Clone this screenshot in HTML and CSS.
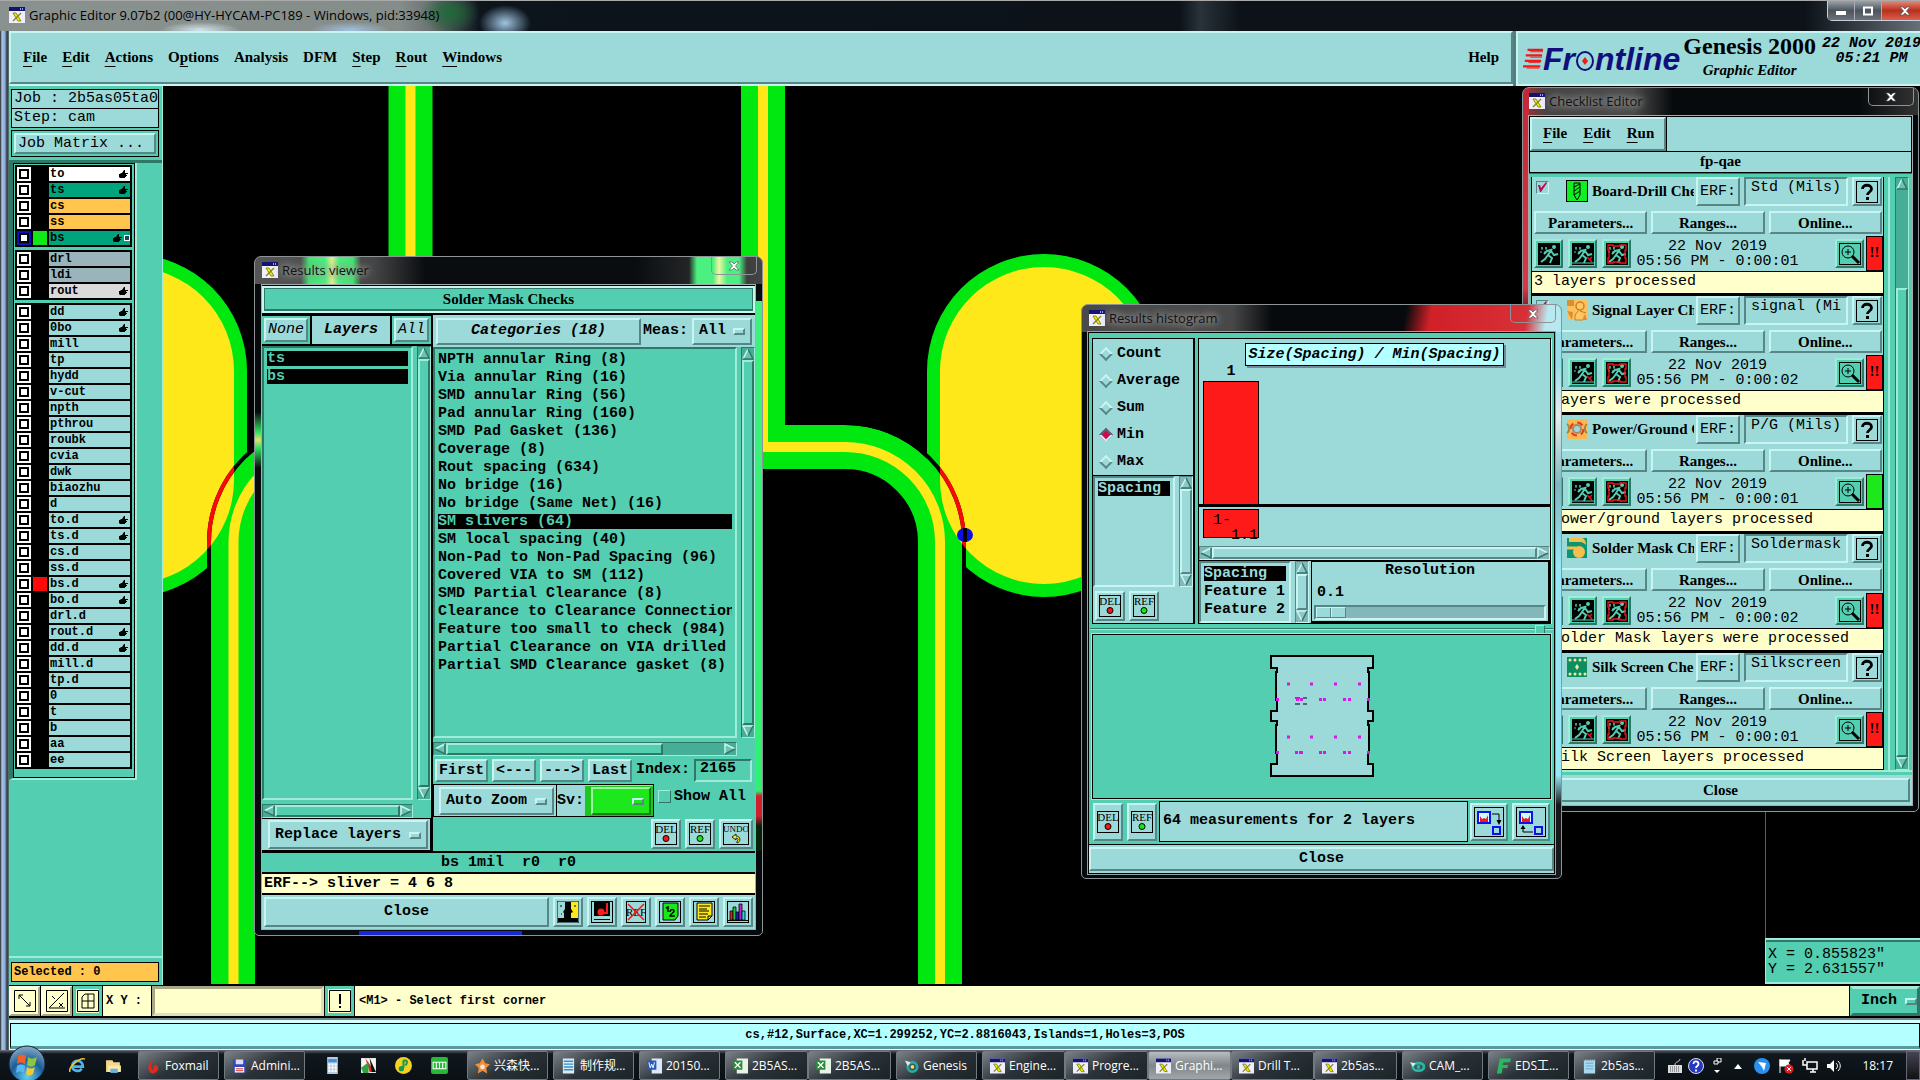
FILE: index.html
```
<!DOCTYPE html>
<html lang="en">
<head>
    <meta charset="UTF-8">
    <meta name="viewport" content="width=device-width, initial-scale=1.0">
    <title>Graphic Editor</title>
    <link rel="stylesheet" href="styles.css">
</head>
<body>
    <!-- icon set -->
    <svg class="defs" aria-hidden="true">
        <symbol id="xwin" viewBox="0 0 16 16"><rect width="16" height="16" fill="#eef"/><rect width="16" height="4" fill="#14146e"/><rect x="11" y="1" width="1" height="2" fill="#99f"/><rect x="13" y="1" width="1" height="2" fill="#99f"/><path d="M4 6h3l5 8H9z" fill="#f0f000" stroke="#8a8a10"/><path d="M12 6l-8 8" stroke="#8a8a10" stroke-width="1.500"/></symbol>
        <symbol id="close" viewBox="0 0 12 10"><path d="M1 1h3l2 2 2-2h3L7.500 5 11 9H8L6 7 4 9H1l3.500-4z" fill="#fff" stroke="#555" stroke-width=".7"/></symbol>
        <symbol id="hand" viewBox="0 0 9 8"><path d="M0 4h1l1-1h1l2-3h1v3h3v1H7v1h1v1H7v1H6v1H1L0 7z"/></symbol>
        <symbol id="up" viewBox="0 0 12 12"><path d="M6 1L1 11h10z" fill="#9cdada" fill-opacity=".45"/><path d="M6 1L1 11" stroke="#c8f8f0" stroke-width="1.500"/><path d="M6 1l5 10H1" fill="none" stroke="#2f7868" stroke-width="1.500"/></symbol>
        <symbol id="down" viewBox="0 0 12 12"><path d="M6 11L1 1h10z" fill="#9cdada" fill-opacity=".45"/><path d="M11 1H1l5 10" fill="none" stroke="#c8f8f0" stroke-width="1.500"/><path d="M11 1L6 11" stroke="#2f7868" stroke-width="1.500"/></symbol>
        <symbol id="left" viewBox="0 0 12 12"><path d="M1 6l10-5v10z" fill="#9cdada" fill-opacity=".45"/><path d="M11 1L1 6" stroke="#c8f8f0" stroke-width="1.500"/><path d="M1 6l10 5V1" fill="none" stroke="#2f7868" stroke-width="1.500"/></symbol>
        <symbol id="right" viewBox="0 0 12 12"><path d="M11 6L1 1v10z" fill="#9cdada" fill-opacity=".45"/><path d="M1 11V1l10 5" fill="none" stroke="#c8f8f0" stroke-width="1.500"/><path d="M11 6L1 11" stroke="#2f7868" stroke-width="1.500"/></symbol>
        <symbol id="del" viewBox="0 0 22 22"><rect x=".5" y=".5" width="21" height="21" fill="none" stroke="#000"/><text x="11" y="10" class="icon-text">DEL</text><circle cx="11" cy="15.500" r="3" fill="#f01818" stroke="#000"/></symbol>
        <symbol id="ref" viewBox="0 0 22 22"><rect x=".5" y=".5" width="21" height="21" fill="none" stroke="#000"/><text x="11" y="10" class="icon-text">REF</text><circle cx="11" cy="15.500" r="3" fill="#18e818" stroke="#000"/></symbol>
        <symbol id="undo" viewBox="0 0 26 22"><rect x=".5" y=".5" width="25" height="21" fill="none" stroke="#000"/><text x="13" y="9" class="icon-text small">UNDO</text><path d="M9 14l4-3v2c5 0 5 6 1 7v-2c2-1 1-3-1-3v2z" fill="#ffe81a" stroke="#000" stroke-width=".8"/></symbol>
        <symbol id="faces" viewBox="0 0 22 22"><rect width="22" height="22" fill="#9cdada" stroke="#000"/><rect x="14" y="1" width="7" height="20" fill="#ffe81a"/><path d="M8 1h6v7l2 3-2 1v5h7v4H1v-4h6v-5l-1-1 2-3z"/><path d="M4 4v2M5 13H4M18 4v2" stroke="#000"/></symbol>
        <symbol id="stamp" viewBox="0 0 22 22"><rect x=".5" y=".5" width="21" height="21" fill="none" stroke="#000"/><path d="M3 1h16v14H3zM3 18h16v1H3zM3 16h16"/><circle cx="10" cy="11" r="3.500" fill="#ff1a1a"/><path d="M16 2v11M12 12h5" stroke="#ff1a1a" stroke-width="2"/></symbol>
        <symbol id="noref" viewBox="0 0 22 22"><rect x="1.500" y=".5" width="19" height="21" fill="none" stroke="#000"/><text x="11" y="15" class="icon-text">REF</text><path d="M3 3l16 16M19 3L3 19" stroke="#f01818" stroke-width="1.500"/></symbol>
        <symbol id="twelve" viewBox="0 0 22 22"><rect x=".5" y=".5" width="21" height="21" fill="none" stroke="#000"/><path d="M4 2h15v13l-3 4H4z" fill="#18e818" stroke="#000"/><path d="M7 7l2-1v5M11 11c0-3 4-3 4-1s-4 3-4 5h5" fill="none" stroke="#000" stroke-width="1.500"/></symbol>
        <symbol id="note" viewBox="0 0 22 22"><rect x=".5" y=".5" width="21" height="21" fill="none" stroke="#000"/><path d="M4 2h15v13l-4 4H4z" fill="#ffe81a" stroke="#000"/><path d="M6 5h11M6 8h8M6 10h10M6 13h9M6 16h7M15 19v-4h4" stroke="#000" fill="none"/></symbol>
        <symbol id="bars" viewBox="0 0 22 22"><rect x=".5" y=".5" width="21" height="21" fill="none" stroke="#000"/><g stroke="#000" stroke-width=".8"><path d="M3 10h3v9H3z" fill="#e02020"/><path d="M6 6h3v13H6z" fill="#18c838"/><path d="M9 11h3v8H9z" fill="#1020e0"/><path d="M12 3h3v16h-3z" fill="#c020d0"/><path d="M15 10h3v9h-3z" fill="#20d8e8"/></g><path d="M1 19.500h20" stroke="#000"/></symbol>
        <symbol id="todown" viewBox="0 0 30 30"><rect x=".5" y=".5" width="29" height="29" fill="none" stroke="#000"/><rect x="4" y="5" width="12" height="11" fill="#cff" stroke="#1010e8" stroke-width="2"/><path d="M6 15V9l2 3 2-1 2 1 2-4v7z" fill="#f01818"/><rect x="19" y="20" width="7" height="7" fill="#9cdada" stroke="#1010e8" stroke-width="2"/><path d="M18 7h7v9" fill="none" stroke="#000"/><path d="M22.500 13h5L25 18z"/></symbol>
        <symbol id="toup" viewBox="0 0 30 30"><rect x=".5" y=".5" width="29" height="29" fill="none" stroke="#000"/><rect x="4" y="5" width="12" height="11" fill="#cff" stroke="#1010e8" stroke-width="2"/><path d="M6 15V9l2 3 2-1 2 1 2-4v7z" fill="#f01818"/><rect x="19" y="20" width="7" height="7" fill="#9cdada" stroke="#1010e8" stroke-width="2"/><path d="M17 25H7v-5" fill="none" stroke="#000"/><path d="M4.500 22h5L7 18z"/></symbol>
        <symbol id="run" viewBox="0 0 22 22"><rect width="22" height="22" fill="#000"/><circle cx="16" cy="4" r="2" fill="#54ceb0"/><path d="M14 6l-4 6 4 3-2 5M10 12l-3 4-4 3M13 8l3 4 4-1M13 7L9 8l-3 3" stroke="#54ceb0" stroke-width="2" fill="none"/><path d="M3 5h2M7 5h2M4 4v3M8 4v3M2 9h2M6 9h1" stroke="#54ceb0"/></symbol>
        <symbol id="runsel" viewBox="0 0 22 22"><use href="#run"/><path d="M15 14l5 5M20 14l-3 3" stroke="#e01818" stroke-width="1.500"/><path d="M0 20h22" stroke="#54ceb0"/></symbol>
        <symbol id="runbox" viewBox="0 0 22 22"><use href="#run"/><path d="M2 2h5v1h7V2h6v5h-1v8h1v5h-6v-1H7v1H2v-5h1V7H2z" fill="none" stroke="#f01818" stroke-width="1.300"/></symbol>
        <symbol id="lens" viewBox="0 0 22 22"><rect x=".5" y=".5" width="21" height="21" fill="#54ceb0" stroke="#000"/><circle cx="9" cy="9" r="6" fill="none" stroke="#000"/><path d="M9 6v6M6 9h6" stroke="#000"/><path d="M13 13l7 7" stroke="#000" stroke-width="3"/></symbol>
        <symbol id="help" viewBox="0 0 22 22"><rect x=".5" y=".5" width="21" height="21" fill="none" stroke="#000"/><path d="M6.500 8c0-5 9-5 9 0 0 3-4 3-4 6" fill="none" stroke="#000" stroke-width="2.800"/><rect x="10" y="16" width="3" height="3"/></symbol>
        <symbol id="drill" viewBox="0 0 22 22"><rect x=".5" y=".5" width="21" height="21" fill="#10f020" stroke="#000"/><path d="M8 3h6v12l-3 5-3-5zM8 7l6-3M8 11l6-4M8 15l6-4" fill="none" stroke="#000"/></symbol>
        <symbol id="signal" viewBox="0 0 22 22"><rect x="1" y="1" width="20" height="20" fill="#ffc05a"/><path d="M1 1h7v6H1zM1 12l6 1-1 8M19 15l2 6h-5z" fill="#d89038"/><circle cx="14" cy="7" r="4" fill="#ffc864" stroke="#c87e28" stroke-width="1.500"/><path d="M13 11l-4 5v5h8" fill="#ffc864" stroke="#c87e28"/><path d="M14 12l6 2" stroke="#c87e28"/></symbol>
        <symbol id="power" viewBox="0 0 22 22"><rect x="1" y="1" width="20" height="20" fill="#ffb850"/><circle cx="11" cy="11" r="4" fill="#9cdada" stroke="#a08878" stroke-width="2"/><circle cx="11" cy="11" r="6.500" fill="none" stroke="#e04018" stroke-width="2" stroke-dasharray="6 4"/><path d="M1 6c3 2 3 7 0 9M21 6c-3 2-3 7 0 9" fill="none" stroke="#a08050" stroke-width="2"/></symbol>
        <symbol id="mask" viewBox="0 0 22 22"><rect x="1" y="1" width="20" height="20" fill="#0e9470"/><circle cx="13" cy="15" r="6" fill="#f6bf4c"/><path d="M1 11h8l2 3" stroke="#f6bf4c" stroke-width="3" fill="none"/><path d="M3 1h13c3 1 4 4 4 7-3-4-8-3-11-3H3z" fill="#f6bf4c"/></symbol>
        <symbol id="silk" viewBox="0 0 22 22"><rect x="1" y="1" width="20" height="20" fill="#0b8f60"/><g fill="#f4e8a0"><circle cx="4" cy="4" r="1.500"/><circle cx="9" cy="4" r="1.500"/><circle cx="14" cy="4" r="1.500"/><circle cx="19" cy="4" r="1.500"/><circle cx="4" cy="18" r="1.500"/><circle cx="9" cy="18" r="1.500"/><circle cx="14" cy="18" r="1.500"/><circle cx="19" cy="18" r="1.500"/><path d="M9 11l2-3 2 3-2 3z"/></g></symbol>
    </svg>

    <div class="app">
        <div class="app-title">
            <svg class="xicon"><use href="#xwin"/></svg>
            <span>Graphic Editor 9.07b2 (00@HY-HYCAM-PC189 - Windows, pid:33948)</span>
            <div class="win-buttons">
                <button aria-label="Minimize"><svg width="12" height="10"><rect x="1" y="5" width="10" height="4" fill="#fff"/></svg></button>
                <button aria-label="Restore"><svg width="12" height="10"><rect x="2" y="1.500" width="8" height="7" fill="none" stroke="#fff" stroke-width="2"/></svg></button>
                <button class="quit" aria-label="Close"><svg width="12" height="10"><use href="#close"/></svg></button>
            </div>
        </div>

        <header class="top">
            <nav class="menubar">
                <a href="#"><u>F</u>ile</a>
                <a href="#"><u>E</u>dit</a>
                <a href="#"><u>A</u>ctions</a>
                <a href="#">O<u>p</u>tions</a>
                <a href="#">Analysis</a>
                <a href="#">DFM</a>
                <a href="#"><u>S</u>tep</a>
                <a href="#"><u>R</u>out</a>
                <a href="#"><u>W</u>indows</a>
                <a href="#" class="last">Help</a>
            </nav>
            <div class="brand">
                <div class="logo">
                    <svg class="speed" viewBox="0 0 22 26"><g stroke="#f01818" stroke-width="2.500"><path d="M5 3h17M3 9h18M2 15h18M0 21h19"/></g><g stroke="#f01818" stroke-width="1"><path d="M8 5h14M8 11h13M6 17h13M4 23h14"/></g></svg><span>Fr</span><svg class="ring" viewBox="0 0 20 22"><ellipse cx="10" cy="11" rx="8" ry="9" fill="none" stroke="#10107c" stroke-width="2"/><path d="M10 7l3 4-3 4-3-4z" fill="#f01818"/></svg><span>ntline</span>
                </div>
                <div class="product">
                    <strong>Genesis 2000</strong>
                    <em>Graphic Editor</em>
                </div>
                <div class="clock">22 Nov 2019<br>05:21 PM</div>
            </div>
        </header>

        <main class="workspace">
            <aside class="sidebar">
                <div class="job">Job : 2b5as05ta0</div>
                <div class="job">Step: cam</div>
                <div class="matrix"><button class="btn mono">Job Matrix ...</button></div>
                <div class="layer-area">
                    <div class="layers" id="layers"></div>
                </div>
                <div class="selected">Selected : 0</div>
            </aside>
            <div class="canvas">
                <svg class="board" viewBox="163 86 1757 899" preserveAspectRatio="xMinYMin slice">
                    <clipPath id="pads"><rect x="26" y="267" width="208" height="317" rx="104"/><rect x="940" y="267" width="208" height="317" rx="104"/></clipPath>
                    <g fill="none" stroke="#00e810" stroke-width="44">
                        <path d="M410.500 86V300M763 86V447H845A95 95 0 0 1 940 542V984M233 984V542A95 95 0 0 1 328 447"/>
                    </g>
                    <rect x="13" y="254" width="234" height="343" rx="117" fill="#00e810"/>
                    <rect x="927" y="254" width="234" height="343" rx="117" fill="#00e810"/>
                    <rect x="26" y="267" width="208" height="317" rx="104" fill="#ffe81a"/>
                    <rect x="940" y="267" width="208" height="317" rx="104" fill="#ffe81a"/>
                    <path d="M209 575V542A119 119 0 0 1 328 423M964 575V542A119 119 0 0 0 845 423" fill="none" stroke="#000" stroke-width="4"/>
                    <path d="M209 575V542A119 119 0 0 1 328 423M964 575V542A119 119 0 0 0 845 423" fill="none" stroke="#f80808" stroke-width="4" clip-path="url(#pads)"/>
                    <path d="M410.500 86V300M763 86V447H845A95 95 0 0 1 940 542V984M233.500 984V542A95 95 0 0 1 328 447" fill="none" stroke="#ffe81a" stroke-width="10"/>
                    <ellipse cx="965" cy="535" rx="8" ry="7" fill="#1010e0"/>
                    <path d="M965 528v14" stroke="#000" stroke-width="4"/>
                    <path d="M1765.500 800V940" stroke="#2f6f5f"/>
                </svg>
                <div class="coords">X = 0.855823"<br>Y = 2.631557"</div>
            </div>
        </main>

        <div class="cmdline">
            <button class="tool" aria-label="Diagonal"><svg viewBox="0 0 22 22"><path d="M.5.5h21v21H.5zM5 5l11 11M5 9V5h4M16 12v4h-4" fill="none" stroke="#000"/></svg></button>
            <button class="tool" aria-label="Angle"><svg viewBox="0 0 22 22"><path d="M.5.5h21v21H.5zM3 18L18 3M3 18h16M6 6l3 3M13 13l4 4M17 13l-4 4" fill="none" stroke="#000"/></svg></button>
            <button class="tool on" aria-label="Grid"><svg viewBox="0 0 22 22"><path d="M.5.500h21v21H.5zM5 18V7l3-3h9v14zM11 4v14M5 11h12" fill="none" stroke="#000"/></svg></button>
            <label for="xy">X Y :</label>
            <input id="xy" type="text" class="field cream">
            <button class="tool on" aria-label="Apply"><svg viewBox="0 0 22 22"><path d="M.5.500h21v21H.5z" fill="none" stroke="#000"/><path d="M11 4v10M11 16v2" stroke="#000" stroke-width="2"/></svg></button>
            <div class="message">&lt;M1&gt; - Select first corner</div>
            <div class="option units"><select aria-label="Units"><option>Inch</option></select></div>
        </div>
        <div class="status"><div>cs,#12,Surface,XC=1.299252,YC=2.8816043,Islands=1,Holes=3,POS</div></div>
    </div>

    <!-- checklist editor -->
    <section class="win checklist">
        <div class="title"><svg class="xicon"><use href="#xwin"/></svg><span>Checklist Editor</span><button class="x" aria-label="Close"><svg width="12" height="10"><use href="#close"/></svg></button></div>
        <div class="client">
            <div class="cl-menu">
                <nav><a href="#"><u>F</u>ile</a><a href="#"><u>E</u>dit</a><a href="#"><u>R</u>un</a></nav>
            </div>
            <div class="cl-name">fp-qae</div>
            <div class="cl-body">
                <div class="cards" id="cards"></div>
                <div class="vscroll low"><svg><use href="#up"/></svg><i></i><svg><use href="#down"/></svg></div>
            </div>
            <div class="foot"><button class="btn">Close</button></div>
        </div>
    </section>

    <!-- results viewer -->
    <section class="win viewer">
        <div class="title"><svg class="xicon"><use href="#xwin"/></svg><span>Results viewer</span><button class="x" aria-label="Close"><svg width="12" height="10"><use href="#close"/></svg></button></div>
        <div class="client">
            <div class="heading">Solder Mask Checks</div>
            <div class="split">
                <div class="pane left">
                    <div class="layer-head">
                        <div><button class="btn it">None</button></div>
                        <h3>Layers</h3>
                        <div><button class="btn it">All</button></div>
                    </div>
                    <div class="listbox">
                        <ul class="list"><li class="sel">ts</li><li class="sel">bs</li></ul>
                        <div class="vscroll"><svg><use href="#up"/></svg><i></i><svg><use href="#down"/></svg></div>
                        <div class="hscroll"><svg><use href="#left"/></svg><i></i><svg><use href="#right"/></svg></div>
                    </div>
                    <div class="replace"><div class="option"><select aria-label="Layer mode"><option>Replace layers</option></select></div></div>
                </div>
                <div class="pane right">
                    <div class="cat-head">
                        <button class="btn bi">Categories (18)</button>
                        <label for="meas">Meas:</label>
                        <div class="option"><select id="meas"><option>All</option></select></div>
                    </div>
                    <div class="listbox">
                        <ul class="list">
                            <li>NPTH annular Ring (8)</li>
                            <li>Via annular Ring (16)</li>
                            <li>SMD annular Ring (56)</li>
                            <li>Pad annular Ring (160)</li>
                            <li>SMD Pad Gasket (136)</li>
                            <li>Coverage (8)</li>
                            <li>Rout spacing (634)</li>
                            <li>No bridge (16)</li>
                            <li>No bridge (Same Net) (16)</li>
                            <li class="sel">SM slivers (64)</li>
                            <li>SM local spacing (40)</li>
                            <li>Non-Pad to Non-Pad Spacing (96)</li>
                            <li>Covered VIA to SM (112)</li>
                            <li>SMD Partial Clearance (8)</li>
                            <li>Clearance to Clearance Connection</li>
                            <li>Feature too small to check (984)</li>
                            <li>Partial Clearance on VIA drilled</li>
                            <li>Partial SMD Clearance gasket (8)</li>
                        </ul>
                        <div class="vscroll"><svg><use href="#up"/></svg><i></i><svg><use href="#down"/></svg></div>
                        <div class="hscroll part"><svg><use href="#left"/></svg><i></i><svg><use href="#right"/></svg></div>
                    </div>
                    <div class="nav-row">
                        <button class="btn wide">First</button>
                        <button class="btn">&lt;---</button>
                        <button class="btn">---&gt;</button>
                        <button class="btn">Last</button>
                        <label for="index">Index:</label>
                        <input id="index" class="field" type="text" value="2165">
                    </div>
                    <div class="zoom-row">
                        <div class="cell"><div class="option"><select aria-label="Zoom mode"><option>Auto Zoom</option></select></div></div>
                        <div class="cell sv"><label for="sv">Sv:</label><div class="green"><div class="option"><select id="sv"><option></option></select></div></div></div>
                        <label class="show"><input type="checkbox">Show All</label>
                    </div>
                    <div class="icon-row">
                        <button class="btn sq" aria-label="Delete"><svg><use href="#del"/></svg></button>
                        <button class="btn sq" aria-label="Reference"><svg><use href="#ref"/></svg></button>
                        <button class="btn sq undo" aria-label="Undo"><svg><use href="#undo"/></svg></button>
                    </div>
                </div>
            </div>
            <div class="info">bs 1mil&nbsp; r0&nbsp; r0</div>
            <div class="erf">ERF--&gt; sliver = 4 6 8</div>
            <div class="bottom">
                <button class="btn grow">Close</button>
                <button class="btn sq" aria-label="Compare"><svg><use href="#faces"/></svg></button>
                <button class="btn sq" aria-label="Stamp"><svg><use href="#stamp"/></svg></button>
                <button class="btn sq" aria-label="No reference"><svg><use href="#noref"/></svg></button>
                <button class="btn sq" aria-label="Count"><svg><use href="#twelve"/></svg></button>
                <button class="btn sq" aria-label="Notes"><svg><use href="#note"/></svg></button>
                <button class="btn sq" aria-label="Histogram"><svg><use href="#bars"/></svg></button>
            </div>
        </div>
    </section>

    <!-- results histogram -->
    <section class="win histogram">
        <div class="title"><svg class="xicon"><use href="#xwin"/></svg><span>Results histogram</span><button class="x" aria-label="Close"><svg width="12" height="10"><use href="#close"/></svg></button></div>
        <div class="client">
            <div class="h-top">
                <div class="h-left">
                    <fieldset class="radios">
                        <label><input type="radio" name="stat">Count</label>
                        <label><input type="radio" name="stat">Average</label>
                        <label><input type="radio" name="stat">Sum</label>
                        <label><input type="radio" name="stat" checked>Min</label>
                        <label><input type="radio" name="stat">Max</label>
                    </fieldset>
                    <div class="listbox">
                        <ul class="list"><li class="sel">Spacing</li></ul>
                        <div class="vscroll"><svg><use href="#up"/></svg><i></i><svg><use href="#down"/></svg></div>
                    </div>
                    <div class="h-icons">
                        <button class="btn sq" aria-label="Delete"><svg><use href="#del"/></svg></button>
                        <button class="btn sq" aria-label="Reference"><svg><use href="#ref"/></svg></button>
                    </div>
                </div>
                <div class="h-right">
                    <div class="chart">
                        <h4>Size(Spacing) / Min(Spacing)</h4>
                        <div class="plot"><div class="column"><span>1</span><div class="bar"></div></div></div>
                        <div class="axis"><div class="range">1-<br>&nbsp;&nbsp;1.1</div></div>
                        <div class="hscroll"><svg><use href="#left"/></svg><i></i><svg><use href="#right"/></svg></div>
                    </div>
                    <div class="h-controls">
                        <div class="listbox">
                            <ul class="list"><li class="sel">Spacing</li><li>Feature 1</li><li>Feature 2</li></ul>
                            <div class="vscroll"><svg><use href="#up"/></svg><i></i><svg><use href="#down"/></svg></div>
                        </div>
                        <div class="resolution">
                            <label for="res">Resolution</label>
                            <output for="res">0.1</output>
                            <input id="res" type="range" min="0" max="10" value="0">
                        </div>
                    </div>
                </div>
            </div>
            <div class="sash"><i></i></div>
            <div class="map">
                <svg width="104" height="124" viewBox="0 0 104 124">
                    <path d="M1 1h102v12h-5v4h1v28h-1v11h5v10h-5v4h1v28h-1v11h5v12H1v-12h6V98H6V70h1v-4H1V56h6V45H6V17h1v-4H1z" fill="#9cdada" stroke="#000" stroke-width="2"/>
                    <path d="M25 43h5M33 43h4M25 49h5M33 49h4" stroke="#000"/>
                    <g stroke="#d818e8" stroke-width="3">
                        <path d="M17 29h3M40 29h3M64 29h3M88 29h3M17 82h3M40 82h3M64 82h3M88 82h3"/>
                        <path d="M6 44.500h3M26 44.500h3M30 44.500h3M49 44.500h3M53 44.500h3M73 44.500h3M78 44.500h3M97 44.500h3"/>
                        <path d="M6 97.500h3M25 97.500h3M29 97.500h4M49 97.500h3M53 97.500h3M73 97.500h3M78 97.500h3M97 97.500h3"/>
                    </g>
                </svg>
            </div>
            <div class="h-bottom">
                <button class="btn sq" aria-label="Delete"><svg><use href="#del"/></svg></button>
                <button class="btn sq" aria-label="Reference"><svg><use href="#ref"/></svg></button>
                <div class="summary">64 measurements for 2 layers</div>
                <button class="btn big" aria-label="Send down"><svg><use href="#todown"/></svg></button>
                <button class="btn big" aria-label="Send up"><svg><use href="#toup"/></svg></button>
            </div>
            <div class="foot"><button class="btn mono">Close</button></div>
        </div>
    </section>

    <footer class="taskbar">
        <button class="orb" aria-label="Start"><svg viewBox="0 0 38 38"><defs><radialGradient id="og" cx=".5" cy=".85" r=".9"><stop offset="0" stop-color="#5fd0f8"/><stop offset=".5" stop-color="#1c5c98"/><stop offset="1" stop-color="#9bb8cc"/></radialGradient></defs><circle cx="19" cy="19" r="18" fill="url(#og)" stroke="#123"/><path d="M10 11c3-2 5-2 8 0l-1 8c-3-2-5-2-8 0z" fill="#f0602a"/><path d="M20 12c3 2 5 2 9 0l-2 8c-3 2-5 2-8 0z" fill="#8cc83c"/><path d="M9 21c3-2 5-2 8 0l-1 7c-3-2-5-2-8 0z" fill="#58b8f0"/><path d="M19 22c3 2 5 2 8 0l-2 7c-3 2-5 2-7 0z" fill="#f8c830"/></svg></button>
        <div class="quick">
            <svg viewBox="0 0 16 16"><path d="M3 9h10c0-7-9-7-10-1 0 6 7 6 9 3" fill="none" stroke="#4ab4f0" stroke-width="2.500"/><path d="M1 14C-1 10 10 0 15 2" fill="none" stroke="#f4c430" stroke-width="1.500"/></svg>
            <svg viewBox="0 0 16 16"><path d="M1 3h6l1 2h6v9H1z" fill="#f0d888"/><path d="M3 8h12v6H3z" fill="#fae8a8"/><path d="M5 11h7v4H5z" fill="#6ab0e0"/></svg>
        </div>
        <a href="#" class="task"><svg viewBox="0 0 16 16"><path d="M8 0C2 4 0 14 7 16c6 0 8-8 4-9-3 0-5 4-2 5C4 12 5 5 8 0z" fill="#e02a1a"/></svg>Foxmail</a>
        <a href="#" class="task"><svg viewBox="0 0 16 16"><path d="M1 1h13l1 2v12H1z" fill="#3048c0"/><path d="M4 1h8v5H4z" fill="#dde"/><path d="M3 9h10v6H3z" fill="#fff"/><path d="M4 11h8M4 13h8" stroke="#c22"/></svg>Admini...</a>
        <div class="quick wide">
            <svg viewBox="0 0 16 16"><path d="M3 0h10v16H3z" fill="#b8cce0"/><path d="M4 2h8v3H4z" fill="#3890e0"/><path d="M4 7h8M4 10h8M4 13h8" stroke="#fff" stroke-width="2" stroke-dasharray="2 1"/></svg>
            <svg viewBox="0 0 16 16"><path d="M1 1h14v14H1z" fill="#f4f4f4"/><path d="M5 1l9 13H9z" fill="#e02818"/><path d="M9 1l6 13h-4z" fill="#111"/><path d="M1 10l7-5v10H3z" fill="#30a040"/></svg>
            <svg viewBox="0 0 16 16"><circle cx="8" cy="8" r="8" fill="#f8d020"/><path d="M8 3v7M8 3c4 0 4 2 2 5" fill="none" stroke="#1a9850" stroke-width="2"/><circle cx="6" cy="11" r="2.500" fill="#1a9850"/></svg>
            <svg viewBox="0 0 16 16"><rect width="16" height="16" rx="2" fill="#28b838"/><path d="M2 5h12v6H2zM5 5v6M8 5v6M11 5v6" fill="none" stroke="#fff"/></svg>
        </div>
        <a href="#" class="task"><svg viewBox="0 0 16 16"><path d="M8 0l3 5 5 1-4 4 1 6-5-3-5 3 1-6-4-4 5-1z" fill="#f09030"/><circle cx="8" cy="9" r="2.500" fill="#fde"/></svg>兴森快...</a>
        <a href="#" class="task"><svg viewBox="0 0 16 16"><path d="M2 0h12v16H2z" fill="#d8ecf8"/><path d="M3 3h10M3 6h10M3 9h10M3 12h10" stroke="#3890c8" stroke-width="1.500"/></svg>制作规...</a>
        <a href="#" class="task"><svg viewBox="0 0 16 16"><path d="M5 0h11v16H5z" fill="#dfe8f8"/><path d="M0 2h10v10H0z" fill="#2858b8"/><path d="M2 4l1.500 6L5 6l1.500 4L8 4" fill="none" stroke="#fff"/></svg>20150...</a>
        <div class="group">
            <a href="#" class="task"><svg viewBox="0 0 16 16"><path d="M4 0h12v16H4z" fill="#e8f4e8"/><path d="M0 2h10v10H0z" fill="#2c8c3c"/><path d="M2 4l6 6M8 4l-6 6" stroke="#fff" stroke-width="1.500"/></svg>2B5AS...</a>
            <a href="#" class="task"><svg viewBox="0 0 16 16"><path d="M4 0h12v16H4z" fill="#e8f4e8"/><path d="M0 2h10v10H0z" fill="#2c8c3c"/><path d="M2 4l6 6M8 4l-6 6" stroke="#fff" stroke-width="1.500"/></svg>2B5AS...</a>
        </div>
        <a href="#" class="task"><svg viewBox="0 0 16 16"><circle cx="9" cy="9" r="5" fill="none" stroke="#28a8a0" stroke-width="3"/><path d="M1 2l6 2-3 4z" fill="#d8f0e8"/><circle cx="9" cy="9" r="2" fill="#f0e060"/></svg>Genesis</a>
        <div class="group">
            <a href="#" class="task"><svg><use href="#xwin"/></svg>Engine...</a>
            <a href="#" class="task"><svg><use href="#xwin"/></svg>Progre...</a>
            <a href="#" class="task active"><svg><use href="#xwin"/></svg>Graphi...</a>
            <a href="#" class="task"><svg><use href="#xwin"/></svg>Drill T...</a>
            <a href="#" class="task"><svg><use href="#xwin"/></svg>2b5as...</a>
        </div>
        <a href="#" class="task"><svg viewBox="0 0 16 16"><ellipse cx="9" cy="9" rx="6" ry="4" fill="none" stroke="#28b8a8" stroke-width="3"/><circle cx="9" cy="9" r="2" fill="#28b8a8"/><path d="M0 4l6 1-3 4z" fill="#d8f0e8"/></svg>CAM_...</a>
        <a href="#" class="task"><svg viewBox="0 0 16 16"><path d="M4 0h12l-1 4H8L7 7h6l-1 3H7l-1 6H1z" fill="#28b860"/></svg>EDS工...</a>
        <a href="#" class="task"><svg viewBox="0 0 16 16"><path d="M2 1h12v15H2z" fill="#a8d8f0"/><path d="M2 1h12" stroke="#555" stroke-width="2" stroke-dasharray="1 1"/><path d="M4 5h8M4 8h8M4 11h8" stroke="#6aa8c8"/></svg>2b5as...</a>
        <div class="tray">
            <svg viewBox="0 0 16 16"><path d="M1 7h14v8H1z" fill="#ddd"/><path d="M3 9h10M3 11h10M3 13h10" stroke="#555" stroke-dasharray="1 1"/><path d="M8 7c0-4 4-2 5-6" fill="none" stroke="#ccc"/></svg>
            <svg viewBox="0 0 16 16"><circle cx="8" cy="8" r="7.500" fill="#2438c0" stroke="#dde"/><path d="M5.500 6c0-4 5-3 5 0 0 2-2.500 2-2.500 4M8 11.500v2" fill="none" stroke="#fff" stroke-width="1.800"/></svg>
            <svg viewBox="0 0 16 16"><path d="M5 3h4v3H5zM8 3V0h4v4H9" fill="none" stroke="#fff"/><path d="M5 12h6l-3 3z" fill="#fff"/></svg>
            <svg viewBox="0 0 16 16"><path d="M4 11h8L8 6z" fill="#fff"/></svg>
            <svg class="gap" viewBox="0 0 16 16"><circle cx="8" cy="8" r="8" fill="#2890f0"/><path d="M4 4l8 1-2 8-2-4z" fill="#fff"/></svg>
            <svg class="gap" viewBox="0 0 16 16"><path d="M2 1v14M2 2h10l-2 3 2 3H2z" stroke="#fff" fill="#fff"/><circle cx="11" cy="11" r="4.500" fill="#e02020"/><path d="M9 9l4 4M13 9l-4 4" stroke="#fff"/></svg>
            <svg class="gap" viewBox="0 0 16 16"><path d="M5 4h10v7H5zM8 14h6M11 11v3M1 2v5h4M3 0v3" fill="none" stroke="#fff" stroke-width="1.500"/></svg>
            <svg class="gap" viewBox="0 0 16 16"><path d="M1 6h3l4-4v12L4 10H1z" fill="#fff"/><path d="M10 5c2 2 2 4 0 6M12 3c3 3 3 7 0 10" fill="none" stroke="#fff"/></svg>
            <time>18:17</time>
            <button class="peek" aria-label="Show desktop"></button>
        </div>
    </footer>
    <script src="script.js"></script>
</body>
</html>
```
FILE: styles.css
```
*, *::before, *::after {
    box-sizing: border-box;
}

:root {
    --cyan: #9cdada;
    --cyan-hi: #c8f4f2;
    --cyan-lo: #568686;
    --teal: #54ceb0;
    --teal-hi: #a0ecd8;
    --teal-lo: #2f7868;
    --cream: #ffffcc;
    --mono: "Liberation Mono", "Courier New", monospace;
    --serif: "Liberation Serif", "Times New Roman", serif;
    --ui: "Open Sans", "Noto Sans CJK SC", sans-serif;
}

body {
    margin: 0;
    height: 100vh;
    overflow: hidden;
    display: flex;
    flex-direction: column;
    position: relative;
    background: #000;
    color: #000;
    font: bold 15px/18px var(--mono);
}

a {
    color: inherit;
    text-decoration: none;
}

u {
    text-underline-offset: 4px;
}

button, input, select {
    font: inherit;
    color: inherit;
    margin: 0;
    padding: 0;
    border: 0;
    border-radius: 0;
    background: none;
}

h3, h4, ul, fieldset {
    margin: 0;
    padding: 0;
    border: 0;
    font: inherit;
    list-style: none;
}

.defs {
    position: absolute;
    width: 0;
    height: 0;
}

.icon-text {
    font: 11px var(--serif);
    text-anchor: middle;
}

.icon-text.small {
    font-size: 9px;
}

.xicon {
    width: 16px;
    height: 16px;
    flex: none;
}

/* raised controls */
.btn {
    background: var(--cyan);
    border: 2px solid;
    border-color: var(--cyan-hi) var(--cyan-lo) var(--cyan-lo) var(--cyan-hi);
    white-space: nowrap;
    display: flex;
    align-items: center;
    justify-content: center;
}

.btn.it {
    font-weight: normal;
    font-style: italic;
}

.btn.bi {
    font-style: italic;
}

.btn.mono {
    font-family: var(--mono);
}

.btn.sq {
    width: 30px;
    height: 30px;
    flex: none;
}

.btn.sq svg {
    width: 22px;
    height: 22px;
    flex: none;
}

.field {
    border: 2px solid;
    border-color: var(--cyan-lo) var(--cyan-hi) var(--cyan-hi) var(--cyan-lo);
    outline: 0;
    min-width: 0;
}

.option {
    position: relative;
    background: var(--cyan);
    border: 2px solid;
    border-color: var(--cyan-hi) var(--cyan-lo) var(--cyan-lo) var(--cyan-hi);
}

.option select {
    appearance: none;
    width: 100%;
    height: 100%;
    padding: 0 4px 0 5px;
    outline: 0;
}

.option::after {
    content: "";
    position: absolute;
    right: 5px;
    top: 50%;
    margin-top: -3px;
    width: 12px;
    height: 7px;
    border: 2px solid;
    border-color: var(--cyan-hi) var(--cyan-lo) var(--cyan-lo) var(--cyan-hi);
    pointer-events: none;
}

/* lists and scroll bars */
.listbox {
    display: grid;
    grid-template-columns: minmax(0, 1fr) 14px;
    grid-template-rows: minmax(0, 1fr);
    gap: 4px;
    flex: 1;
    min-height: 0;
}

.list {
    border: 2px solid;
    border-color: var(--teal-lo) var(--teal-hi) var(--teal-hi) var(--teal-lo);
    padding: 3px;
    overflow: hidden;
}

.list li {
    height: 15px;
    margin-bottom: 3px;
    line-height: 15px;
    white-space: nowrap;
    overflow: hidden;
}

.list .sel {
    background: #000;
    color: var(--teal);
}

.vscroll, .hscroll {
    display: flex;
    background: #46ae96;
    border: 1px solid;
    border-color: var(--teal-lo) var(--teal-hi) var(--teal-hi) var(--teal-lo);
}

.vscroll {
    flex-direction: column;
}

.hscroll {
    height: 14px;
}

.vscroll svg, .hscroll svg {
    width: 12px;
    height: 12px;
    flex: none;
}

.vscroll i, .hscroll i {
    flex: 1;
    background: var(--teal);
    border: 2px solid;
    border-color: var(--teal-hi) var(--teal-lo) var(--teal-lo) var(--teal-hi);
}

.hscroll.part i {
    flex: 0 0 72%;
}

.hscroll.part svg:last-child {
    margin-left: auto;
}

.vscroll.low i {
    margin-top: 98px;
}

/* main window */
.app {
    flex: 1;
    min-height: 0;
    display: flex;
    flex-direction: column;
    padding-left: 9px;
    background: linear-gradient(90deg, #222 0, #aec6e4 2px, #86a8d8 5px, #333 7px, #54807c 9px);
}

.app-title {
    height: 31px;
    margin-left: -9px;
    padding: 0 0 2px 9px;
    display: flex;
    gap: 4px;
    align-items: center;
    font: 13px/16px var(--ui);
    background:
        radial-gradient(ellipse 26px 18px at 505px 22px, #9fc4e0, transparent),
        radial-gradient(ellipse 30px 20px at 450px 12px, #1f6b38, transparent),
        radial-gradient(ellipse 40px 8px at 200px 29px, #cfe4ea, transparent),
        radial-gradient(ellipse 40px 8px at 350px 29px, #9fc0dc, transparent),
        linear-gradient(90deg, #8a9290 0, #858d8b 400px, #6a7472 430px, #0c141c 480px, #0c1218 1180px, #2a333a 1200px, #0c1218 1240px, #0c1218 94%, #667078 100%);
    border-top: 1px solid #aaa;
}

.win-buttons {
    display: flex;
    align-self: flex-start;
    margin-left: auto;
    border: 1px solid #ccd;
    border-top: 0;
    border-right: 0;
    border-radius: 0 0 0 5px;
}

.win-buttons button {
    width: 27px;
    height: 19px;
    border-right: 1px solid #aab;
    background: linear-gradient(#9aa2aa, #4c545c 50%, #6a727a);
    display: flex;
    align-items: center;
    justify-content: center;
}

.win-buttons .quit {
    width: 38px;
    padding-left: 8px;
    border-right: 0;
    background: linear-gradient(#e08a7c, #b8301c 50%, #d8604c);
}

.top {
    height: 55px;
    display: flex;
    gap: 3px;
    font-family: var(--serif);
}

.menubar {
    flex: 1;
    display: flex;
    align-items: center;
    gap: 15px;
    padding: 0 12px 2px;
    background: var(--cyan);
    border: 2px solid;
    border-color: var(--cyan-hi) var(--cyan-lo) var(--cyan-lo) var(--cyan-hi);
    box-shadow: 0 2px var(--cyan-hi);
    margin-bottom: 2px;
}

.menubar .last {
    margin-left: auto;
}

.brand {
    width: 404px;
    display: flex;
    align-items: center;
    padding-left: 5px;
    background: var(--cyan);
    border: 2px solid var(--cyan-hi);
    border-right: 0;
    overflow: hidden;
    white-space: nowrap;
}

.logo {
    display: flex;
    align-items: center;
    font: italic bold 32px/34px "Liberation Sans", Arial, sans-serif;
    color: #10107c;
}

.speed {
    width: 20px;
    height: 26px;
}

.ring {
    width: 20px;
    height: 22px;
    margin-top: 4px;
}

.product {
    display: flex;
    flex-direction: column;
    align-items: center;
    margin-left: 3px;
    padding-bottom: 6px;
}

.product strong {
    font-size: 24px;
    line-height: 28px;
}

.product em {
    font-size: 15px;
    line-height: 20px;
}

.clock {
    margin-left: 6px;
    align-self: flex-start;
    padding-top: 3px;
    font: italic bold 15px/15px var(--mono);
    text-align: center;
}

.workspace {
    flex: 1;
    min-height: 0;
    display: flex;
}

.sidebar {
    width: 154px;
    flex: none;
    display: flex;
    flex-direction: column;
    padding: 3px 3px 3px 2px;
    background: var(--teal);
    border-right: 1px solid var(--teal-hi);
}

.job {
    height: 20px;
    margin-bottom: -1px;
    padding-left: 2px;
    background: var(--cyan);
    border: 1px solid #000;
    font-weight: normal;
    white-space: nowrap;
}

.matrix {
    margin-top: 3px;
    padding: 2px;
    border: 1px solid #000;
    height: 27px;
}

.matrix .btn {
    width: 100%;
    height: 21px;
    padding-left: 2px;
    justify-content: flex-start;
    font-weight: normal;
}

.layer-area {
    flex: 1;
    min-height: 0;
    margin: 3px -3px 4px -2px;
    border-top: 3px solid var(--teal-lo);
    border-bottom: 2px solid var(--teal-hi);
}

.layers {
    width: 128px;
    display: flex;
    flex-direction: column;
    gap: 3px;
    padding: 2px 3px 9px 2px;
    border-left: 4px solid var(--teal-lo);
    border-right: 2px solid var(--teal-hi);
    border-bottom: 2px solid var(--teal-hi);
    box-shadow: inset 1px 1px #000, inset -1px -1px #000;
}

.layer-group {
    display: flex;
    flex-direction: column;
    gap: 2px;
    padding: 2px;
    background: #000;
}

.layer {
    display: flex;
    gap: 2px;
    height: 14px;
    font: bold 12px/14px var(--mono);
}

.layer input {
    appearance: none;
    width: 14px;
    height: 14px;
    background: #fff;
    border: 2px solid #fff;
    outline: 2px solid #000;
    outline-offset: -4px;
}

.layer input:checked {
    border-color: #1010b8;
    border-width: 3px;
}

.layer .swatch {
    width: 14px;
}

.layer label {
    flex: 1;
    padding-left: 1px;
    background: var(--cyan);
    display: flex;
    align-items: center;
}

.layer svg {
    width: 9px;
    height: 8px;
    margin-right: 2px;
}

.layer label span {
    flex: 1;
}

.layer .grid-mark {
    width: 6px;
    height: 6px;
    flex: none;
    border: 1px solid #fff;
    background: #245;
}

.selected {
    height: 20px;
    padding-left: 2px;
    background: #ffc54d;
    border: 1px solid #000;
    font: bold 12px/18px var(--mono);
}

.canvas {
    flex: 1;
    min-width: 0;
    position: relative;
    background: #000;
    overflow: hidden;
}

.board {
    display: block;
    width: 100%;
    height: 100%;
}

.coords {
    position: absolute;
    right: 0;
    bottom: 1px;
    width: 155px;
    height: 46px;
    padding: 7px 0 0 2px;
    background: var(--teal);
    border: 2px solid var(--teal-hi);
    border-width: 2px 0 2px 1px;
    box-shadow: inset 0 2px var(--teal-lo);
    font: 15px/15px var(--mono);
}

.cmdline {
    height: 33px;
    display: flex;
    align-items: stretch;
    gap: 1px;
    padding-bottom: 1px;
    background: #000;
    border-top: 1px solid #000;
    border-bottom: 1px solid #000;
    font-size: 12px;
}

.tool {
    width: 31px;
    padding: 2px;
    background: var(--cream);
    border: 2px solid;
    border-color: #fffff0 #a8a888 #a8a888 #fffff0;
    display: flex;
    align-items: center;
    justify-content: center;
}

.tool.on {
    width: 29px;
    outline: 3px solid var(--teal);
    outline-offset: -3px;
}

.tool svg {
    width: 22px;
    height: 22px;
    flex: none;
}

.cmdline label {
    width: 48px;
    padding-left: 3px;
    background: var(--cream);
    line-height: 31px;
}

.field.cream {
    width: 172px;
    padding-left: 5px;
    background: var(--cream);
    border: 3px solid;
    border-color: #a8a888 #e0e0b8 #e0e0b8 #a8a888;
}

.message {
    flex: 1;
    padding-left: 4px;
    background: var(--cream);
    line-height: 31px;
}

.option.units {
    width: 70px;
    background: var(--teal);
    border: 3px solid;
    border-color: var(--teal-hi) var(--teal-lo) var(--teal-lo) var(--teal);
    font-size: 15px;
}

.option.units select {
    padding-left: 8px;
}

.option.units::after {
    right: 0;
}

.status {
    height: 32px;
    padding: 3px 0 2px 1px;
    background: #d8ffff;
    border-top: 2px solid #708888;
}

.status div {
    height: 26px;
    background: #b4ffff;
    border: 1px solid #000;
    border-bottom: 3px solid #5a9a9a;
    font-size: 12px;
    line-height: 22px;
    text-align: center;
}

/* floating windows */
.win {
    position: absolute;
    display: flex;
    flex-direction: column;
    padding: 0 6px 5px;
    border: 1px solid #8d9498;
    border-radius: 7px 7px 5px 5px;
    background: #0a0d10;
}

.title {
    height: 27px;
    flex: none;
    display: flex;
    gap: 4px;
    padding: 0 0 2px 1px;
    align-items: center;
    font: 13px/18px var(--ui);
}

.title span {
    padding-right: 20px;
    color: #111;
    text-shadow: 0 0 6px #aaa, 0 0 10px #999, 0 0 14px #999;
}

.title .x {
    width: 46px;
    height: 18px;
    margin: 0 -1px 0 auto;
    align-self: flex-start;
    border: 1px solid #8d9498;
    border-top: 0;
    border-radius: 0 0 5px 5px;
    display: flex;
    align-items: center;
    justify-content: center;
}

.client {
    flex: 1;
    min-height: 0;
    display: flex;
    flex-direction: column;
    border: 1px solid #aaa;
}

.viewer {
    left: 254px;
    top: 256px;
    width: 509px;
    height: 680px;
    background:
        linear-gradient(#1a28d0, #1a28d0) 104px 100% / 163px 4px no-repeat,
        linear-gradient(#40f080 0, #30f070 490px, #d02030 495px, #d02030 515px, #082008 525px) 100% 44px / 6px 550px no-repeat,
        linear-gradient(transparent, #30e060 20px, #e0e070 28px, #30e060 36px, transparent 56px) 0 155px / 6px 60px no-repeat,
        linear-gradient(90deg, transparent 46px, #40e870 54px, #4cf080 70px, #e8f090 77px, #4cf080 84px, #40e870 98px, transparent 106px, transparent 434px, #4cf080 442px, #4cf080 458px, #f4f4a0 464px, #4cf080 472px, #4cf080 484px, transparent 492px) 0 0 / 100% 27px no-repeat,
        linear-gradient(90deg, #555 0, #444 120px, #0a0d10 170px, #0a0d10 380px, #444 100%) 0 0 / 100% 27px no-repeat,
        #070a0c;
}

.viewer .client {
    background: #000;
    gap: 2px;
    padding: 1px 0 0;
}

.heading {
    height: 27px;
    flex: none;
    border: 2px solid var(--cyan-hi);
    background: var(--teal);
    box-shadow: inset 1px 1px var(--teal-lo), inset -1px -2px var(--teal-lo);
    font: bold 15px/22px var(--serif);
    text-align: center;
}

.split {
    flex: 1;
    min-height: 0;
    display: flex;
    gap: 2px;
}

.pane {
    display: flex;
    flex-direction: column;
    background: var(--teal);
}

.pane.left {
    width: 169px;
}

.pane.right {
    flex: 1;
    min-width: 0;
}

.pane .listbox {
    grid-template-rows: minmax(0, 1fr) 14px;
}

.layer-head {
    height: 31px;
    flex: none;
    display: flex;
    gap: 2px;
    background: #000;
    border-top: 1px solid #000;
    border-bottom: 2px solid #000;
}

.layer-head div {
    padding: 2px;
    background: var(--teal);
}

.layer-head .btn {
    height: 24px;
    padding: 0 2px;
}

.layer-head h3 {
    flex: 1;
    background: var(--cyan);
    font-style: italic;
    line-height: 28px;
    text-align: center;
}

.replace {
    height: 33px;
    padding: 1px 2px 1px 6px;
    background: var(--cyan);
    border: 1px solid #000;
    border-left: 0;
}

.replace .option {
    height: 29px;
}

.cat-head {
    height: 32px;
    flex: none;
    display: flex;
    align-items: center;
    padding: 1px 3px;
    background: var(--cyan);
}

.cat-head .btn {
    width: 205px;
    height: 27px;
}

.cat-head label {
    flex: 1;
    padding-left: 2px;
}

.cat-head .option {
    width: 60px;
    height: 27px;
}

.nav-row {
    height: 28px;
    flex: none;
    display: flex;
    gap: 4px;
    padding: 3px 3px 2px 2px;
}

.nav-row .btn {
    width: 44px;
}

.nav-row .btn.wide {
    width: 53px;
}

.nav-row label {
    padding-top: 2px;
}

.nav-row .field {
    flex: 1;
    padding: 0 0 4px 4px;
    border-color: var(--teal-lo) var(--teal-hi) var(--teal-hi) var(--teal-lo);
}

.zoom-row {
    height: 33px;
    flex: none;
    display: flex;
}

.cell {
    display: flex;
    align-items: center;
    padding: 0 2px 0 5px;
    background: var(--cyan);
    border: 1px solid #000;
}

.cell .option {
    width: 115px;
    height: 28px;
}

.cell.sv {
    padding: 0;
    border-left: 0;
}

.green {
    margin-left: 1px;
    padding: 1px 2px 1px 6px;
    background: #1cc81c;
}

.green .option {
    width: 60px;
    height: 28px;
    background: #1ce81c;
    border-color: #9cf49c #1a801a #1a801a #9cf49c;
}

.show {
    display: flex;
    gap: 3px;
    padding: 4px 0 0 4px;
}

.show input {
    appearance: none;
    width: 13px;
    height: 13px;
    margin-top: 2px;
    border: 1px solid;
    border-color: var(--teal-hi) var(--teal-lo) var(--teal-lo) var(--teal-hi);
}

.icon-row {
    height: 34px;
    flex: none;
    display: flex;
    justify-content: flex-end;
    gap: 4px;
    padding: 2px 2px 2px 0;
}

.btn.sq.undo {
    width: 34px;
}

.btn.undo svg {
    width: 26px;
}

.info {
    height: 19px;
    flex: none;
    background: var(--teal);
    line-height: 20px;
    text-align: center;
}

.erf {
    height: 19px;
    flex: none;
    padding-left: 2px;
    background: var(--cream);
    line-height: 20px;
}

.bottom {
    height: 34px;
    flex: none;
    display: flex;
    gap: 4px;
    padding: 2px;
    background: var(--cyan);
}

.bottom .grow {
    flex: 1;
    height: 30px;
}

/* histogram */
.histogram {
    left: 1081px;
    top: 304px;
    width: 481px;
    height: 575px;
    padding-bottom: 4px;
    background:
        linear-gradient(100deg, transparent 320px, #d02028 345px, #d83038 440px, #b8e8f0 460px) 0 0 / 100% 27px no-repeat,
        linear-gradient(#98e0ec 0, #98e0ec 60px, #e8f0f0 110px, #80b8c0 180px, #98e8f8 260px, #98e8f8 470px, #14181a 500px) 100% 0 / 6px 100% no-repeat,
        linear-gradient(90deg, #4a4a4a 0, #484848 150px, #070a0c 190px) 0 0 / 100% 27px no-repeat,
        #070a0c;
}

.histogram .client {
    padding: 5px 3px 0;
    background: var(--teal);
    border-color: #000;
    box-shadow: 0 0 0 1px #98a0a0;
}

.h-top {
    height: 286px;
    flex: none;
    display: flex;
    gap: 3px;
}

.h-left {
    width: 103px;
    display: flex;
    flex-direction: column;
    background: var(--cyan);
    border: 1px solid #000;
    border-right: 2px solid #000;
}

.radios {
    display: flex;
    flex-direction: column;
    padding-top: 1px;
    border-bottom: 1px solid #000;
}

.radios label {
    height: 27px;
    display: flex;
    align-items: center;
    gap: 6px;
    padding-left: 8px;
}

.radios input {
    appearance: none;
    width: 10px;
    height: 10px;
    flex: none;
    transform: rotate(45deg);
    border: 2px solid;
    border-color: var(--cyan-hi) var(--cyan-lo) var(--cyan-lo) var(--cyan-hi);
}

.radios input:checked {
    background: #d00850;
    border-color: #567 var(--cyan-hi) var(--cyan-hi) #567;
}

.histogram .list, .histogram .vscroll, .histogram .hscroll {
    border-color: var(--cyan-lo) var(--cyan-hi) var(--cyan-hi) var(--cyan-lo);
}

.histogram .vscroll, .histogram .hscroll {
    background: #84b8b8;
}

.histogram .vscroll i, .histogram .hscroll i {
    background: var(--cyan);
    border-color: var(--cyan-hi) var(--cyan-lo) var(--cyan-lo) var(--cyan-hi);
}

.histogram .sel {
    color: var(--cyan);
}

.h-left .listbox {
    margin: 0 0 2px;
}

.h-icons {
    display: flex;
    gap: 4px;
    padding: 2px;
}

.h-right {
    flex: 1;
    min-width: 0;
    display: flex;
    flex-direction: column;
    background: var(--cyan);
    border: 1px solid #000;
    box-shadow: 1px 1px var(--cyan-hi);
}

.chart {
    position: relative;
    flex: 1;
    display: flex;
    flex-direction: column;
}

.chart h4 {
    position: absolute;
    left: 46px;
    top: 4px;
    width: 259px;
    background: #b4ffff;
    border: 1px solid #000;
    box-shadow: 2px 2px #789;
    font-style: italic;
    line-height: 20px;
    padding-top: 1px;
    text-align: center;
    white-space: nowrap;
}

.plot {
    flex: 1;
    display: flex;
    align-items: flex-end;
    padding-left: 4px;
    border-bottom: 3px solid #000;
}

.column {
    width: 56px;
    text-align: center;
}

.bar {
    height: 123px;
    background: #ff1a1a;
    border: 1px solid #000;
    border-bottom: 0;
}

.axis {
    height: 39px;
    padding: 2px 0 0 4px;
}

.range {
    width: 56px;
    height: 29px;
    padding: 3px 0 0 9px;
    background: #ff1a1a;
    border: 1px solid #000;
    font-weight: normal;
    line-height: 15px;
}

.h-controls {
    height: 63px;
    display: flex;
    gap: 2px;
    border-top: 1px solid #000;
}

.h-controls .listbox {
    flex: none;
    width: 110px;
}

.resolution {
    flex: 1;
    display: flex;
    flex-direction: column;
    padding: 0 2px;
    border: 1px solid #000;
    border-right-width: 2px;
    border-bottom-width: 2px;
}

.resolution label {
    text-align: center;
}

.resolution output {
    padding: 4px 0 0 3px;
}

.resolution input {
    appearance: none;
    width: 100%;
    height: 15px;
    margin-top: 3px;
    background: #84b8b8;
    border: 2px solid;
    border-color: var(--cyan-lo) var(--cyan-hi) var(--cyan-hi) var(--cyan-lo);
}

.resolution input::-webkit-slider-thumb {
    appearance: none;
    width: 30px;
    height: 11px;
    background: linear-gradient(90deg, transparent 13px, var(--cyan-lo) 13px, var(--cyan-lo) 14px, var(--cyan-hi) 14px, var(--cyan-hi) 15px, transparent 15px), var(--cyan);
    border: 1px solid;
    border-color: var(--cyan-hi) var(--cyan-lo) var(--cyan-lo) var(--cyan-hi);
}

.sash {
    height: 10px;
    flex: none;
    display: flex;
    justify-content: flex-end;
    align-items: center;
    margin: 0 -2px;
    padding-right: 8px;
    background: linear-gradient(var(--teal) 4px, var(--teal-lo) 4px, var(--teal-lo) 5px, var(--teal-hi) 5px, var(--teal-hi) 6px, var(--teal) 6px);
}

.sash i {
    width: 10px;
    height: 9px;
    background: var(--teal);
    border: 1px solid;
    border-color: var(--teal-hi) var(--teal-lo) var(--teal-lo) var(--teal-hi);
}

.map {
    flex: 1;
    min-height: 0;
    display: flex;
    align-items: center;
    justify-content: center;
    border: 1px solid #000;
    outline: 1px solid var(--teal-hi);
}

.h-bottom {
    height: 45px;
    flex: none;
    display: flex;
    align-items: center;
    gap: 4px;
    padding: 0 1px;
}

.h-bottom .sq {
    height: 38px;
}

.summary {
    flex: 1;
    height: 41px;
    margin: 0 -2px;
    padding-left: 3px;
    background: var(--cyan);
    border: 1px solid #000;
    line-height: 38px;
}

.btn.big {
    width: 38px;
    height: 38px;
}

.big svg {
    width: 30px;
    height: 30px;
    flex: none;
}

.foot {
    flex: none;
    padding: 2px 0;
    background: var(--cyan);
    border-top: 1px solid #000;
}

.foot .btn {
    width: 100%;
    height: 24px;
}

.histogram .foot {
    margin: 0 -3px;
}

/* checklist */
.checklist {
    left: 1522px;
    top: 87px;
    width: 397px;
    height: 725px;
    font-family: var(--serif);
    padding: 0 5px;
    padding-bottom: 5px;
    background:
        linear-gradient(#c02838, #d83848 200px, #070a0c 240px) 0 0 / 6px 100% no-repeat,
        linear-gradient(90deg, #a83038 0, #444 24px, #4a4a4a 110px, #070a0c 150px, #070a0c 85%, #333 100%) 0 0 / 100% 27px no-repeat,
        #070a0c;
}

.checklist .client {
    background: var(--teal);
}

.cl-menu {
    height: 36px;
    flex: none;
    background: var(--cyan);
    border: 1px solid #000;
}

.cl-menu nav {
    width: 136px;
    height: 34px;
    display: flex;
    align-items: center;
    gap: 16px;
    padding: 0 0 2px 11px;
    border: 2px solid;
    border-color: var(--cyan-hi) var(--cyan-lo) var(--cyan-lo) var(--cyan-hi);
    outline: 1px solid #000;
}

.cl-name {
    height: 21px;
    flex: none;
    background: var(--cyan);
    border: 1px solid #000;
    border-top: 0;
    line-height: 19px;
    text-align: center;
}

.cl-body {
    flex: 1;
    min-height: 0;
    display: flex;
    gap: 5px;
    margin-bottom: 3px;
    padding: 3px 3px 0 0;
    border-top: 1px solid var(--teal-lo);
    border-bottom: 2px solid var(--teal-hi);
    overflow: hidden;
}

.cards {
    flex: 1;
    min-width: 0;
    padding: 0 4px 0 2px;
    border-right: 2px solid var(--teal-hi);
}

.cl-body .vscroll {
    width: 14px;
    flex: none;
}

.card {
    height: 119px;
    display: flex;
    flex-direction: column;
    background: var(--cyan);
    border: 1px solid #000;
    border-top: 0;
    border-bottom-width: 3px;
}

.card-head {
    height: 32px;
    display: flex;
    align-items: flex-start;
    padding: 0 1px 0 4px;
}

.card-head input[type="checkbox"] {
    appearance: none;
    width: 13px;
    height: 13px;
    flex: none;
    margin: 4px 17px 0 0;
    border: 1px solid;
    border-color: var(--cyan-lo) var(--cyan-hi) var(--cyan-hi) var(--cyan-lo);
}

.card-head input[type="checkbox"]::before {
    content: "";
    display: block;
    width: 10px;
    height: 10px;
    background: #c00850;
    clip-path: polygon(10% 30%, 30% 30%, 40% 60%, 90% 0, 100% 10%, 40% 100%, 30% 100%);
}

.card-head > svg {
    width: 22px;
    height: 22px;
    flex: none;
    margin-top: 3px;
}

.card-name {
    flex: 1;
    min-width: 0;
    padding-top: 5px;
    margin: 0 2px 0 4px;
    overflow: hidden;
    white-space: nowrap;
}

.card-head .erf-btn {
    width: 44px;
    height: 29px;
    font: 15px/18px var(--mono);
}

.card-head .field {
    width: 104px;
    height: 29px;
    margin: 0 4px;
    padding: 0 0 9px 5px;
    font: 15px/18px var(--mono);
}

.card-head .sq {
    height: 29px;
}

.card-tools {
    display: flex;
    gap: 4px;
    padding: 2px 1px 2px 2px;
}

.card-tools .btn {
    flex: 1;
    height: 23px;
}

.card-run {
    height: 35px;
    display: flex;
    align-items: center;
    padding-left: 2px;
}

.card-run .sq {
    width: 29px;
    height: 29px;
    margin-right: 5px;
    background: var(--teal);
    border-color: var(--teal-hi) var(--teal-lo) var(--teal-lo) var(--teal-hi);
}

.card-run p {
    flex: 1;
    margin: 0;
    font: 15px/15px var(--mono);
    text-align: center;
    padding-right: 36px;
    white-space: nowrap;
}

.card-run .sq.lens {
    margin-right: 2px;
}

.flag {
    width: 17px;
    align-self: stretch;
    background: #ff1a1a;
    border: 1px solid #000;
    text-align: center;
    line-height: 30px;
}

.flag.ok {
    background: #1ce81c;
}

.card-msg {
    flex: 1;
    padding-left: 2px;
    background: var(--cream);
    border-top: 1px solid #000;
    font: 15px/20px var(--mono);
    white-space: nowrap;
}

.checklist .foot {
    padding: 3px 2px;
    border-top: 0;
}

/* taskbar */
.taskbar {
    height: 30px;
    flex: none;
    display: flex;
    align-items: stretch;
    gap: 5px;
    background: linear-gradient(#4a545c, #10181e 3px, #0a1014);
    border-top: 1px solid #667;
    color: #fff;
    font: 12px/16px var(--ui);
}

.orb {
    width: 38px;
    height: 38px;
    margin: -6px 17px 0 8px;
    flex: none;
}

.quick {
    width: 64px;
    display: flex;
    align-items: center;
    justify-content: space-between;
    margin-left: 1px;
    padding-right: 11px;
    flex: none;
}

.quick.wide {
    width: 152px;
    margin-left: 0;
    padding: 0 14px;
}

.quick svg {
    width: 17px;
    height: 17px;
}

.task {
    width: 81px;
    flex: none;
    display: flex;
    align-items: center;
    gap: 4px;
    padding-left: 7px;
    border: 1px solid #707a80;
    border-radius: 2px;
    background: linear-gradient(150deg, #7a8288, #2a3238 50%, #1c2428);
    white-space: nowrap;
    overflow: hidden;
}

.task svg {
    width: 15px;
    height: 16px;
    flex: none;
}

.group {
    display: flex;
}

.group .task {
    width: 83px;
}

.task.active {
    background: linear-gradient(#b8bcc0, #80868a 50%, #a0a6aa);
}

.tray {
    flex: 1;
    display: flex;
    align-items: center;
    justify-content: flex-end;
    gap: 5px;
}

.tray svg {
    width: 16px;
    height: 16px;
}

.tray svg.gap {
    margin-left: 3px;
}

.tray time {
    margin-left: 15px;
}

.peek {
    width: 14px;
    align-self: stretch;
    margin-left: 8px;
    border: 1px solid #667;
    background: linear-gradient(#445, #111);
}
```
FILE: script.js
```
const groups = [
    [
        { name: 'to', color: '#fff', hand: true },
        { name: 'ts', color: '#00a47c', hand: true },
        { name: 'cs', color: '#ffc54d' },
        { name: 'ss', color: '#ffc54d' },
        { name: 'bs', color: '#00a47c', hand: true, swatch: '#10e818', on: true, grid: true }
    ],
    [
        { name: 'drl', color: '#9ab4bc' },
        { name: 'ldi', color: '#9ab4bc' },
        { name: 'rout', color: '#dadada', hand: true }
    ],
    ['dd*', '0bo*', 'mill', 'tp', 'hydd', 'v-cut', 'npth', 'pthrou', 'roubk', 'cvia', 'dwk', 'biaozhu', 'd',
        'to.d*', 'ts.d*', 'cs.d', 'ss.d', 'bs.d*', 'bo.d*', 'drl.d', 'rout.d*', 'dd.d*', 'mill.d', 'tp.d',
        '0', 't', 'b', 'aa', 'ee'].map(n => ({
        name: n.replace('*', ''),
        hand: n.endsWith('*'),
        swatch: n === 'bs.d*' ? '#ff0808' : ''
    }))
];

document.getElementById('layers').innerHTML = groups.map(rows =>
    '<div class="layer-group">' + rows.map(l => `
        <div class="layer">
            <input type="checkbox" id="layer-${l.name}" ${l.on ? 'checked' : ''}>
            <div class="swatch" style="background:${l.swatch || '#000'}"></div>
            <label for="layer-${l.name}" ${l.color ? `style="background:${l.color}"` : ''}>
                <span>${l.name}</span>
                ${l.hand ? '<svg><use href="#hand"/></svg>' : ''}
                ${l.grid ? '<div class="grid-mark"></div>' : ''}
            </label>
        </div>`).join('') + '</div>'
).join('');

const checks = [
    { icon: 'drill', name: 'Board-Drill Checks', erf: 'Std (Mils)', time: '0:00:01', msg: '3 layers processed' },
    { icon: 'signal', name: 'Signal Layer Checks', erf: 'signal (Mi', time: '0:00:02', msg: '8 layers were processed' },
    { icon: 'power', name: 'Power/Ground Checks', erf: 'P/G (Mils)', time: '0:00:01', msg: '0 power/ground layers processed', ok: true },
    { icon: 'mask', name: 'Solder Mask Checks', erf: 'Soldermask', time: '0:00:02', msg: '2 Solder Mask layers were processed' },
    { icon: 'silk', name: 'Silk Screen Checks', erf: 'Silkscreen', time: '0:00:01', msg: '2 Silk Screen layers processed' }
];

document.getElementById('cards').innerHTML = checks.map(c => `
    <div class="card">
        <div class="card-head">
            <input type="checkbox" checked aria-label="${c.name}">
            <svg><use href="#${c.icon}"/></svg>
            <div class="card-name">${c.name}</div>
            <button class="btn erf-btn">ERF:</button>
            <input type="text" class="field" value="${c.erf}" aria-label="ERF">
            <button class="btn sq" aria-label="Help"><svg><use href="#help"/></svg></button>
        </div>
        <div class="card-tools">
            <button class="btn">Parameters...</button>
            <button class="btn">Ranges...</button>
            <button class="btn">Online...</button>
        </div>
        <div class="card-run">
            <button class="btn sq" aria-label="Run"><svg><use href="#run"/></svg></button>
            <button class="btn sq" aria-label="Run selected"><svg><use href="#runsel"/></svg></button>
            <button class="btn sq" aria-label="Run in area"><svg><use href="#runbox"/></svg></button>
            <p>22 Nov 2019<br>05:56 PM - ${c.time}</p>
            <button class="btn sq lens" aria-label="Results"><svg><use href="#lens"/></svg></button>
            <div class="flag ${c.ok ? 'ok' : ''}">${c.ok ? '' : '!!'}</div>
        </div>
        <div class="card-msg">${c.msg}</div>
    </div>`).join('');
```
